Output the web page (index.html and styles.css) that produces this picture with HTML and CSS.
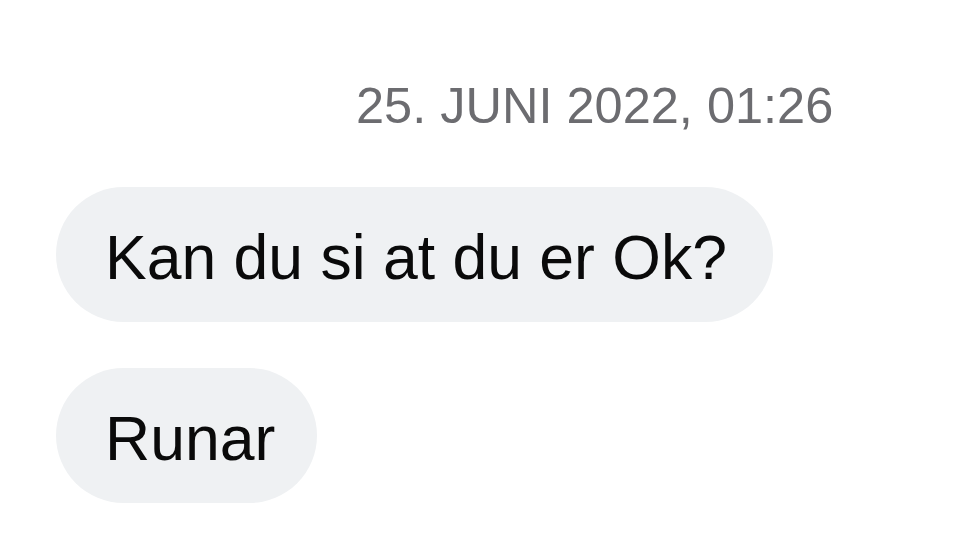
FILE: index.html
```html
<!DOCTYPE html>
<html lang="no">
<head>
<meta charset="utf-8">
<title>Melding</title>
<link rel="stylesheet" href="styles.css">
</head>
<body>
<main class="thread">
  <div class="stamp">25. JUNI 2022, 01:26</div>
  <div class="bubble first">Kan du si at du er Ok?</div>
  <div class="bubble second">Runar</div>
</main>
</body>
</html>
```
FILE: styles.css
```css
html, body {
  margin: 0;
  padding: 0;
  background: #ffffff;
}
body {
  width: 960px;
  height: 548px;
  overflow: hidden;
  font-family: "Liberation Sans", Arial, sans-serif;
}
.thread {
  display: flex;
  flex-direction: column;
  align-items: flex-start;
  padding: 76px 0 0 56px;
}
.stamp {
  margin-left: 300px;
  font-size: 50.5px;
  line-height: 60px;
  color: #6c6c70;
  white-space: nowrap;
}
.bubble {
  box-sizing: border-box;
  height: 135px;
  padding: 5px 46px 0 49px;
  line-height: 130px;
  font-size: 62.5px;
  color: #0a0a0a;
  background: #eff1f3;
  border-radius: 67.5px;
  white-space: nowrap;
}
.first {
  margin-top: 51px;
}
.second {
  margin-top: 46px;
  padding-right: 42px;
}
```
